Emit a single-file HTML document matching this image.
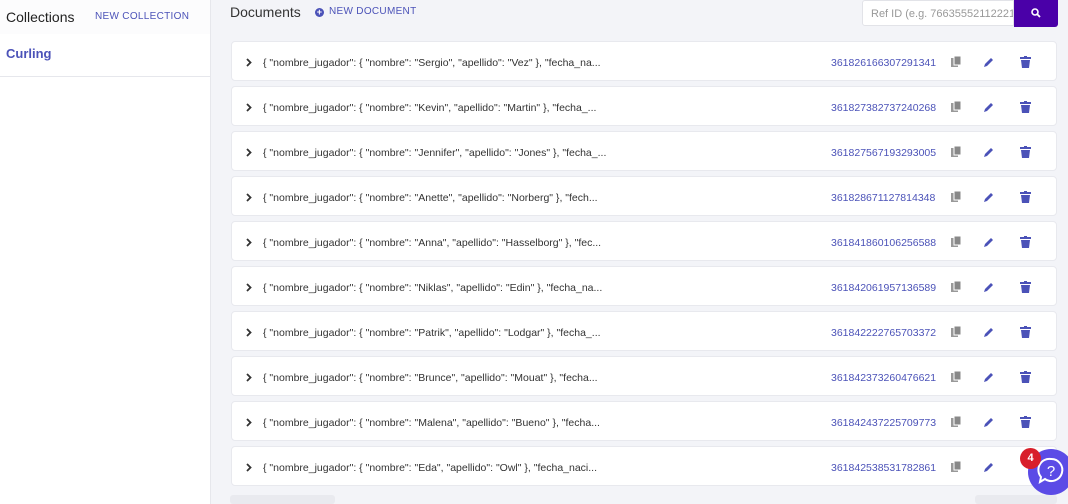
<!DOCTYPE html>
<html><head><style>
body{margin:0;width:1068px;height:504px;overflow:hidden;background:#f3f4f8;font-family:"Liberation Sans",sans-serif;position:relative}
.side{position:absolute;left:0;top:0;width:210px;height:504px;background:#fff;border-right:1px solid #e6e7ec}
.sh{height:34px;background:#fcfcfd;position:relative}
.sh .t{position:absolute;left:6px;top:9px;font-size:14px;color:#222}
.sh .n{position:absolute;left:95px;top:11px;font-size:10px;color:#4b52b8;letter-spacing:.3px}
.cur{position:absolute;left:6px;top:46px;font-size:13px;font-weight:bold;color:#4b52b8}
.sep{position:absolute;left:0;top:76px;width:210px;border-top:1px solid #e6e7ec}
.doc{position:absolute;left:230px;top:4px;font-size:14px;color:#333}
.nd{position:absolute;left:315px;top:6px;font-size:10px;color:#4b52b8;letter-spacing:.3px}
.nd b{display:inline-block;width:9px;height:9px;border-radius:50%;background:#4b52b8;color:#fff;font-size:9px;line-height:9px;text-align:center;margin-right:5px;vertical-align:-1px}
.inp{position:absolute;left:862px;top:0;width:152px;height:26px;background:#fff;border:1px solid #e2e3e8;border-radius:3px 0 0 3px;box-sizing:border-box;font-size:11px;color:#999;padding:7px 0 0 8px;white-space:nowrap;overflow:hidden}
.btn{position:absolute;left:1014px;top:0;width:44px;height:27px;background:#4a00a8;border-radius:0 0 3px 0}
.row{position:absolute;left:231px;width:826px;height:40px;background:#fff;border:1px solid #e8e9ee;border-radius:4px;box-sizing:border-box}
.row .x{position:absolute;left:31px;top:15px;font-size:10.5px;color:#333;white-space:nowrap}
.row .id{position:absolute;left:599px;top:15px;font-size:10.5px;color:#4b52b8}
.row svg{position:absolute;top:14px}
</style></head><body>
<div class="side"><div class="sh"><span class="t">Collections</span><span class="n">NEW COLLECTION</span></div>
<div class="cur">Curling</div><div class="sep"></div></div>
<div class="doc">Documents</div><div class="nd"><b>+</b>NEW DOCUMENT</div>
<div class="inp">Ref ID (e.g. 76635552112221)</div>
<div class="btn"><svg width="44" height="27"><circle cx="21" cy="12" r="3" fill="none" stroke="#fff" stroke-width="1.6"/><line x1="23" y1="14" x2="26" y2="17" stroke="#fff" stroke-width="1.8"/></svg></div>
<div id="rows"></div>
<div style="position:absolute;left:230px;top:495px;width:105px;height:9px;background:#e9eaef;border-radius:3px"></div>
<div style="position:absolute;left:975px;top:495px;width:82px;height:9px;background:#e9eaef;border-radius:3px"></div>
<div style="position:absolute;left:1028px;top:449px;width:46px;height:46px;border-radius:50%;background:#5b4be6"></div>
<svg style="position:absolute;left:1036px;top:456px" width="30" height="32"><path d="M15 3a11 11 0 1 1-6 20l-5 3 1-5A11 11 0 0 1 15 3z" fill="none" stroke="#fff" stroke-width="2"/><text x="15" y="20" font-size="15" fill="#fff" text-anchor="middle" font-family="Liberation Sans">?</text></svg>
<div style="position:absolute;left:1020px;top:448px;width:21px;height:21px;border-radius:50%;background:#d81e2a;color:#fff;font-size:11px;font-weight:bold;text-align:center;line-height:21px">4</div>
<script>
var d=[["Sergio","Vez"," }, \"fecha_na...","361826166307291341"],["Kevin","Martin"," }, \"fecha_...","361827382737240268"],["Jennifer","Jones"," }, \"fecha_...","361827567193293005"],["Anette","Norberg"," }, \"fech...","361828671127814348"],["Anna","Hasselborg"," }, \"fec...","361841860106256588"],["Niklas","Edin"," }, \"fecha_na...","361842061957136589"],["Patrik","Lodgar"," }, \"fecha_...","361842222765703372"],["Brunce","Mouat"," }, \"fecha...","361842373260476621"],["Malena","Bueno"," }, \"fecha...","361842437225709773"],["Eda","Owl"," }, \"fecha_naci...","361842538531782861"]];
var h="";d.forEach(function(r,i){var t=41+i*45;
h+='<div class="row" style="top:'+t+'px"><svg style="left:14px;top:16px" width="6" height="9"><path d="M1 1l3.5 3.5L1 8" fill="none" stroke="#333" stroke-width="1.8"/></svg><span class="x">{ "nombre_jugador": { "nombre": "'+r[0]+'", "apellido": "'+r[1]+'"'+r[2]+'</span><span class="id">'+r[3]+'</span>'+
'<svg style="left:719px" width="12" height="13"><rect x="0" y="2" width="7" height="9" fill="#999"/><rect x="3" y="0" width="7" height="9" fill="#888" stroke="#fff" stroke-width="1"/></svg>'+
'<svg style="left:751px" width="12" height="12"><path d="M1 11l1-3 6-6 2 2-6 6z" fill="#4b52b8"/></svg>'+
(i==9?'':'<svg style="left:788px" width="11" height="12"><rect x="0" y="1" width="11" height="2" fill="#4b52b8"/><rect x="4" y="0" width="3" height="2" fill="#4b52b8"/><path d="M1 4h9l-1 8H2z" fill="#4b52b8"/></svg>')+'</div>';});
document.getElementById("rows").innerHTML=h;
</script>
</body></html>
